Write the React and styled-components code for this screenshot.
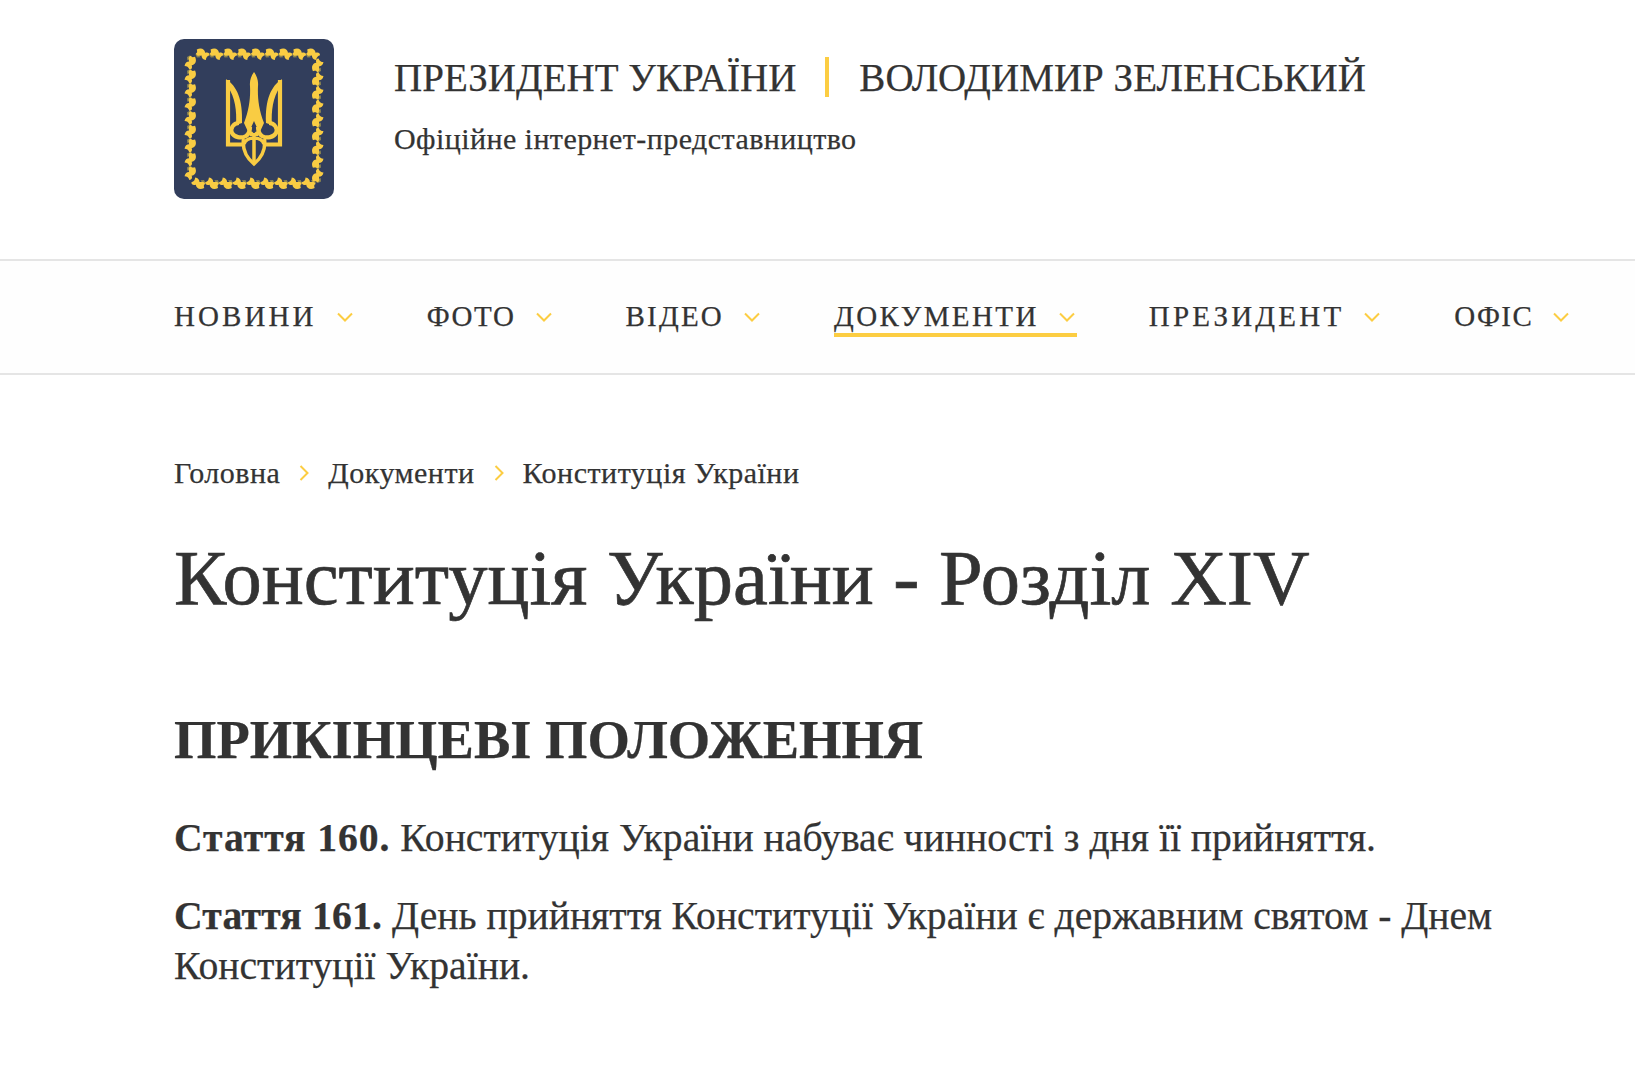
import React from "react"
import styled, { createGlobalStyle } from "styled-components"

const GlobalStyle = createGlobalStyle`
  html, body {
    margin: 0;
    background: #fff;
    color: #333;
    font-family: "Liberation Serif", "Times New Roman", serif;
    -webkit-text-stroke: 0.25px #333;
  }
`

const Page = styled.div`
  min-height: 1074px;
  overflow: hidden;
`

const Header = styled.header`
  display: flex;
  gap: 60px;
  height: 220px;
  padding: 39px 0 0 174px;
`

const LogoMark = styled.svg`
  display: block;
  width: 160px;
  height: 160px;
  flex: none;
`

const HeaderText = styled.div`
  padding-top: 18px;
`

const TitleRow = styled.div`
  display: flex;
  align-items: center;
  height: 40px;
  font-size: 39px;
  letter-spacing: 0.03px;
`

const TitleDivider = styled.span`
  width: 4px;
  height: 40px;
  margin: 0 30px 0 29px;
  background: #fccd42;
`

const Subtitle = styled.div`
  margin-top: 25px;
  font-size: 30px;
  letter-spacing: 0.43px;
  line-height: 34px;
`

const Nav = styled.nav`
  display: flex;
  gap: 72px;
  height: 112px;
  padding-left: 174px;
  background: #fefefe;
  border-top: 2px solid #e5e5e5;
  border-bottom: 2px solid #e5e5e5;
  white-space: nowrap;
`

const NavItem = styled.a`
  display: flex;
  align-items: center;
  gap: 20px;
  align-self: center;
  box-sizing: border-box;
  height: 40px;
  padding: 3px 2px 0 0;
  font-size: 29px;
  letter-spacing: ${props => props.$tracking}px;
  border-bottom: 4px solid ${props => (props.$active ? "#fccd42" : "transparent")};
`

const Arrow = styled.svg`
  display: block;
  width: 16px;
  height: 10px;
  fill: none;
  stroke: #fccd42;
  stroke-width: 2;
`

const Main = styled.main`
  padding: 0 0 0 174px;
`

const Crumbs = styled.div`
  display: flex;
  align-items: center;
  gap: 19px;
  margin-top: 81px;
  font-size: 30px;
  letter-spacing: 0.5px;
  line-height: 34px;
`

const CrumbArrow = styled.svg`
  display: block;
  width: 10px;
  height: 16px;
  fill: none;
  stroke: #fccd42;
  stroke-width: 2;
`

const Title = styled.h1`
  margin: 43px 0 0;
  font-size: 78.5px;
  font-weight: 400;
  line-height: 90px;
  -webkit-text-stroke: 0.7px #333;
`

const Section = styled.h2`
  margin: 87px 0 0;
  font-size: 54.5px;
  font-weight: 700;
  line-height: 60px;
`

const Paragraph = styled.p`
  width: 1360px;
  margin: ${props => props.$gap}px 0 0;
  font-size: 39.65px;
  line-height: 50px;
`

const Article = styled.b`
  letter-spacing: ${props => props.$tracking}px;
`

const leaves = []
for (let i = 0; i < 9; i++) {
  const p = 28 + i * 13.8
  leaves.push([p, 15.5, 28], [p - 3, 144, 208], [16, p - 5, 118], [144, p - 1, 298])
}

const Leaf = ({ x, y, r }) => (
  <g transform={`translate(${x} ${y}) rotate(${r})`}>
    <path fill="#8d8650" d="M-6 3L-3 5L0 3L-3 2Z" />
    <path d="M-7 -2C-4 -6 0 -6 2 -3C4 -5 6 -5 7 -3C5 -1 5 1 6 3C3 4 1 3 0 1C-2 3 -4 4 -6 2C-5 1 -5 0 -7 -2Z" />
  </g>
)

const Logo = () => (
  <LogoMark viewBox="0 0 160 160">
    <rect width="160" height="160" rx="10" fill="#323e5c" />
    <g fill="#f9cc43">
      {leaves.map(([x, y, r]) => (
        <Leaf key={`${x}-${y}`} x={x} y={y} r={r} />
      ))}
      <path d="M52 40C63 47 69 61 68 84L62 86C63 72 61 58 54 48Z" />
      <path d="M108 40C97 47 91 61 92 84L98 86C97 72 99 58 106 48Z" />
      <path
        fillRule="evenodd"
        d="M80 33C83 37 84.500 42 84 47C83.500 58 84.500 70 90 84L84 97H76L70 84C75.500 70 76.500 58 76 47C75.500 42 77 37 80 33ZM80 82L75.500 92C78 92 79 93 80 95C81 93 82 92 84.500 92Z"
      />
    </g>
    <g fill="none" stroke="#f9cc43" strokeWidth="4.200">
      <path d="M54 41V105.500H70M106 41V105.500H90" />
      <path d="M65 84C59 84 56 90 58 94C60 98 67 100 72 97C75 95 76 91 76 88" />
      <path d="M95 84C101 84 104 90 102 94C100 98 93 100 88 97C85 95 84 91 84 88" />
    </g>
    <g fill="none" stroke="#f9cc43" strokeWidth="3.500">
      <path d="M69.500 100C68 112 74 120 80 125C86 120 92 112 90.500 100" />
      <path d="M80 94V125M70 105C72 97 88 97 90 105" />
    </g>
  </LogoMark>
)

const navItems = [
  { label: "НОВИНИ", tracking: 3.1 },
  { label: "ФОТО", tracking: 1.6 },
  { label: "ВІДЕО", tracking: 2.2 },
  { label: "ДОКУМЕНТИ", tracking: 2.4 },
  { label: "ПРЕЗИДЕНТ", tracking: 3.2 },
  { label: "ОФІС", tracking: 1.4 },
]

export default function App() {
  return (
    <Page>
      <GlobalStyle />
      <Header>
        <Logo />
        <HeaderText>
          <TitleRow>
            ПРЕЗИДЕНТ УКРАЇНИ
            <TitleDivider />
            ВОЛОДИМИР ЗЕЛЕНСЬКИЙ
          </TitleRow>
          <Subtitle>Офіційне інтернет-представництво</Subtitle>
        </HeaderText>
      </Header>
      <Nav>
        {navItems.map(item => (
          <NavItem key={item.label} $active={item.label === "ДОКУМЕНТИ"} $tracking={item.tracking}>
            {item.label}
            <Arrow viewBox="0 0 16 10">
              <path d="M1 1.500L8 8.500L15 1.500" />
            </Arrow>
          </NavItem>
        ))}
      </Nav>
      <Main>
        <Crumbs>
          Головна
          <CrumbArrow viewBox="0 0 10 16">
            <path d="M1.500 1L8.500 8L1.500 15" />
          </CrumbArrow>
          Документи
          <CrumbArrow viewBox="0 0 10 16">
            <path d="M1.500 1L8.500 8L1.500 15" />
          </CrumbArrow>
          Конституція України
        </Crumbs>
        <Title>Конституція України - Розділ XIV</Title>
        <Section>ПРИКІНЦЕВІ ПОЛОЖЕННЯ</Section>
        <Paragraph $gap={43}>
          <Article $tracking={0.95}>Стаття 160.</Article> Конституція України набуває чинності з дня її прийняття.
        </Paragraph>
        <Paragraph $gap={28}>
          <Article $tracking={0.2}>Стаття 161.</Article> День прийняття Конституції України є державним святом - Днем Конституції України.
        </Paragraph>
      </Main>
    </Page>
  )
}
